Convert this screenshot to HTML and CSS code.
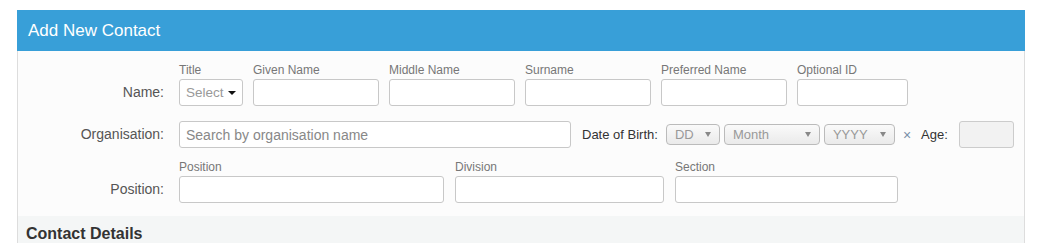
FILE: index.html
```html
<!DOCTYPE html>
<html lang="en">
<head>
    <meta charset="UTF-8">
    <meta name="viewport" content="width=device-width, initial-scale=1.0">
    <title>Add New Contact</title>
    <link rel="stylesheet" href="styles.css">
</head>
<body>
    <div class="panel">
        <div class="panel-heading">Add New Contact</div>
        <div class="panel-body">
            <div class="form-row">
                <label class="row-label">Name:</label>
                <div class="field w-title">
                    <span class="field-label">Title</span>
                    <div class="select title-select"><span class="placeholder">Select</span><span class="caret"></span></div>
                </div>
                <div class="field w-name">
                    <span class="field-label">Given Name</span>
                    <input type="text" class="text-input">
                </div>
                <div class="field w-name">
                    <span class="field-label">Middle Name</span>
                    <input type="text" class="text-input">
                </div>
                <div class="field w-name">
                    <span class="field-label">Surname</span>
                    <input type="text" class="text-input">
                </div>
                <div class="field w-name">
                    <span class="field-label">Preferred Name</span>
                    <input type="text" class="text-input">
                </div>
                <div class="field w-optional">
                    <span class="field-label">Optional ID</span>
                    <input type="text" class="text-input">
                </div>
            </div>

            <div class="form-row row-org">
                <label class="row-label">Organisation:</label>
                <input type="text" class="text-input org-input" placeholder="Search by organisation name">
                <span class="inline-label dob-label">Date of Birth:</span>
                <div class="date-select w-dd"><span>DD</span><span class="small-caret"></span></div>
                <div class="date-select w-month"><span>Month</span><span class="small-caret"></span></div>
                <div class="date-select w-yyyy"><span>YYYY</span><span class="small-caret"></span></div>
                <span class="clear-date">&times;</span>
                <span class="inline-label age-label">Age:</span>
                <input type="text" class="text-input age-input" disabled>
            </div>

            <div class="form-row row-position">
                <label class="row-label">Position:</label>
                <div class="field w-position">
                    <span class="field-label">Position</span>
                    <input type="text" class="text-input">
                </div>
                <div class="field w-division">
                    <span class="field-label">Division</span>
                    <input type="text" class="text-input">
                </div>
                <div class="field w-section">
                    <span class="field-label">Section</span>
                    <input type="text" class="text-input">
                </div>
            </div>
        </div>
        <div class="section-heading">Contact Details</div>
    </div>
</body>
</html>
```

FILE: styles.css
```css
body {
    font-family: "Liberation Sans", Arial, sans-serif;
    margin: 0;
    background-color: #fff;
    color: #333;
}
.panel {
    margin: 10px 18px 0 17px;
    border-left: 1px solid #ddd;
    border-right: 1px solid #ddd;
    background-color: #fcfcfc;
}
.panel-heading {
    margin: 0 -1px;
    height: 41px;
    line-height: 41px;
    padding-left: 11px;
    background-color: #389fd8;
    color: #fff;
    font-size: 17px;
}
.panel-body {
    padding: 12px 0 13px 0;
}
.form-row {
    display: flex;
    align-items: flex-end;
}
.row-label {
    width: 146px;
    margin-right: 15px;
    height: 27px;
    line-height: 27px;
    text-align: right;
    font-size: 14px;
    color: #555;
}
.field {
    display: flex;
    flex-direction: column;
    margin-right: 10px;
}
.field-label {
    font-size: 12px;
    line-height: 14px;
    margin-bottom: 2px;
    color: #777;
}
.text-input {
    box-sizing: border-box;
    width: 100%;
    height: 27px;
    margin: 0;
    padding: 0 6px;
    border: 1px solid #c8c8c8;
    border-radius: 3px;
    background-color: #fff;
    font-family: inherit;
    font-size: 14px;
    color: #555;
}
.text-input::placeholder {
    color: #888;
}
.w-title { width: 64px; }
.w-name { width: 126px; }
.w-optional { width: 111px; }
.select {
    box-sizing: border-box;
    height: 27px;
    display: flex;
    align-items: center;
    justify-content: space-between;
    padding: 0 6px 0 6px;
    border: 1px solid #c8c8c8;
    border-radius: 3px;
    background-color: #fff;
}
.placeholder {
    font-size: 13.5px;
    color: #999;
}
.caret {
    width: 0;
    height: 0;
    border-left: 4px solid transparent;
    border-right: 4px solid transparent;
    border-top: 4px solid #111;
    margin-top: 1px;
}

.row-org {
    align-items: center;
    margin-top: 15px;
}
.org-input {
    width: 392px;
}
.inline-label {
    font-size: 13px;
    color: #333;
}
.dob-label {
    margin-left: 11px;
    margin-right: 8px;
}
.date-select {
    box-sizing: border-box;
    height: 21px;
    display: flex;
    align-items: center;
    justify-content: space-between;
    padding: 0 8px 0 8px;
    margin-right: 4px;
    border: 1px solid #bbb;
    border-radius: 4px;
    background: linear-gradient(#fafafa, #eaeaea);
    font-size: 13px;
    color: #999;
}
.w-dd { width: 54px; }
.w-month { width: 96px; }
.w-yyyy { width: 71px; }
.small-caret {
    width: 0;
    height: 0;
    border-left: 3px solid transparent;
    border-right: 3px solid transparent;
    border-top: 5px solid #888;
}
.clear-date {
    font-size: 14px;
    color: #7a8fa8;
    margin-left: 4px;
    margin-right: 10px;
}
.age-label {
    margin-right: 11px;
}
.age-input {
    width: 55px;
    background-color: #f2f2f2;
    border-color: #ccc;
}

.row-position {
    margin-top: 12px;
}
.w-position { width: 265px; margin-right: 11px; }
.w-division { width: 209px; margin-right: 11px; }
.w-section { width: 223px; }

.section-heading {
    background-color: #f4f6f6;
    padding: 8px 8px 10px 8px;
    font-size: 16px;
    line-height: 20px;
    font-weight: bold;
    color: #333;
}
```
